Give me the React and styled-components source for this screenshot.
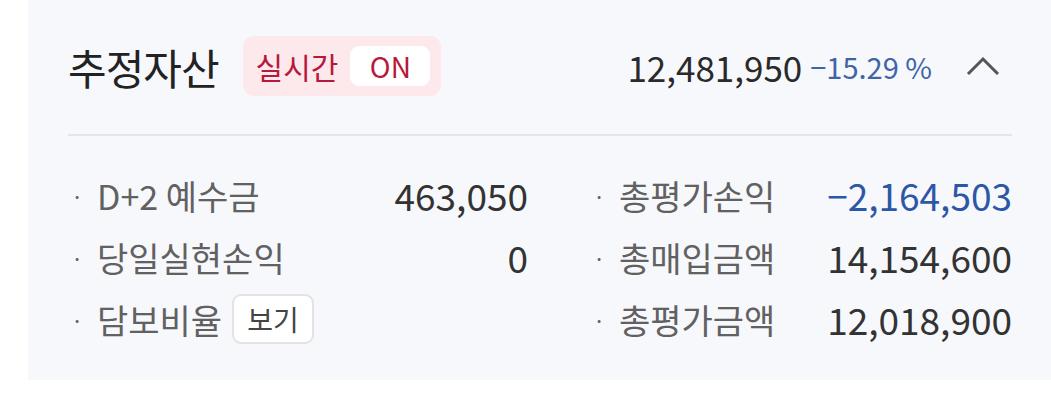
import styled, { createGlobalStyle } from "styled-components"

const GlobalStyle = createGlobalStyle`
  body {
    margin: 0;
    background: #ffffff;
    font-family: "Noto Sans CJK KR", "Noto Sans", sans-serif;
  }
`

const Panel = styled.div`
  margin-left: 28px;
  width: 1023px;
  height: 380px;
  box-sizing: border-box;
  padding: 36px 39px 0 40px;
  background: #f7f8fc;
`

const Header = styled.div`
  display: flex;
  align-items: center;
  height: 60px;
`

const Title = styled.div`
  font-size: 42px;
  font-weight: 400;
  color: #222;
  letter-spacing: -1px;
  margin-right: 24px;
`

const Badge = styled.div`
  display: flex;
  align-items: center;
  height: 60px;
  padding: 0 11px 0 13px;
  box-sizing: border-box;
  border-radius: 11px;
  background: #fde9eb;
  color: #b51a3e;
  font-size: 30px;
`

const BadgePill = styled.span`
  display: inline-flex;
  align-items: center;
  justify-content: center;
  margin-left: 12px;
  width: 80px;
  height: 40px;
  border-radius: 9px;
  background: #ffffff;
  font-size: 28px;
`

const HeaderRight = styled.div`
  margin-left: auto;
  display: flex;
  align-items: center;
`

const Total = styled.span`
  font-size: 35px;
  color: #2a2a2a;
`

const Rate = styled.span`
  margin-left: 8px;
  font-size: 29px;
  color: #4065a6;
`

const Chevron = styled.svg`
  margin-left: 34px;
  margin-right: 12px;
  display: block;
`

const Divider = styled.div`
  margin-top: 38px;
  height: 2px;
  background: #e4e5ea;
`

const Grid = styled.div`
  display: grid;
  grid-template-columns: 460px 1fr;
  column-gap: 62px;
  padding-top: 28px;
`

const Row = styled.div`
  display: flex;
  align-items: center;
  height: 62px;
`

const Label = styled.div`
  display: flex;
  align-items: center;
  font-size: 34px;
  color: #616161;
  &::before {
    content: "·";
    width: 29px;
    padding-left: 3px;
    box-sizing: border-box;
    font-size: 22px;
  }
`

const Value = styled.div`
  margin-left: auto;
  font-size: 37px;
  color: ${(p) => (p.$minus ? "#2c57a7" : "#333333")};
`

const ViewButton = styled.button`
  margin-left: 10px;
  height: 50px;
  padding: 0 13px;
  border: 2px solid #e3e3e3;
  border-radius: 9px;
  background: #ffffff;
  font-family: inherit;
  font-size: 28px;
  color: #444;
`

const leftRows = [
  { label: "D+2 예수금", value: "463,050" },
  { label: "당일실현손익", value: "0" },
  { label: "담보비율", button: "보기" },
]

const rightRows = [
  { label: "총평가손익", value: "−2,164,503", minus: true },
  { label: "총매입금액", value: "14,154,600" },
  { label: "총평가금액", value: "12,018,900" },
]

const InfoRow = ({ row }) => (
  <Row>
    <Label>{row.label}</Label>
    {row.button && <ViewButton>{row.button}</ViewButton>}
    {row.value && <Value $minus={row.minus}>{row.value}</Value>}
  </Row>
)

const App = () => {
  return (
    <>
      <GlobalStyle />
      <Panel>
        <Header>
          <Title>추정자산</Title>
          <Badge>
            실시간
            <BadgePill>ON</BadgePill>
          </Badge>
          <HeaderRight>
            <Total>12,481,950</Total>
            <Rate>−15.29 %</Rate>
            <Chevron width="34" height="20" viewBox="0 0 34 20">
              <polyline points="2,18 17,3 32,18" fill="none" stroke="#555" strokeWidth="3" />
            </Chevron>
          </HeaderRight>
        </Header>
        <Divider />
        <Grid>
          <div>
            {leftRows.map((row) => (
              <InfoRow key={row.label} row={row} />
            ))}
          </div>
          <div>
            {rightRows.map((row) => (
              <InfoRow key={row.label} row={row} />
            ))}
          </div>
        </Grid>
      </Panel>
    </>
  )
}

export default App
